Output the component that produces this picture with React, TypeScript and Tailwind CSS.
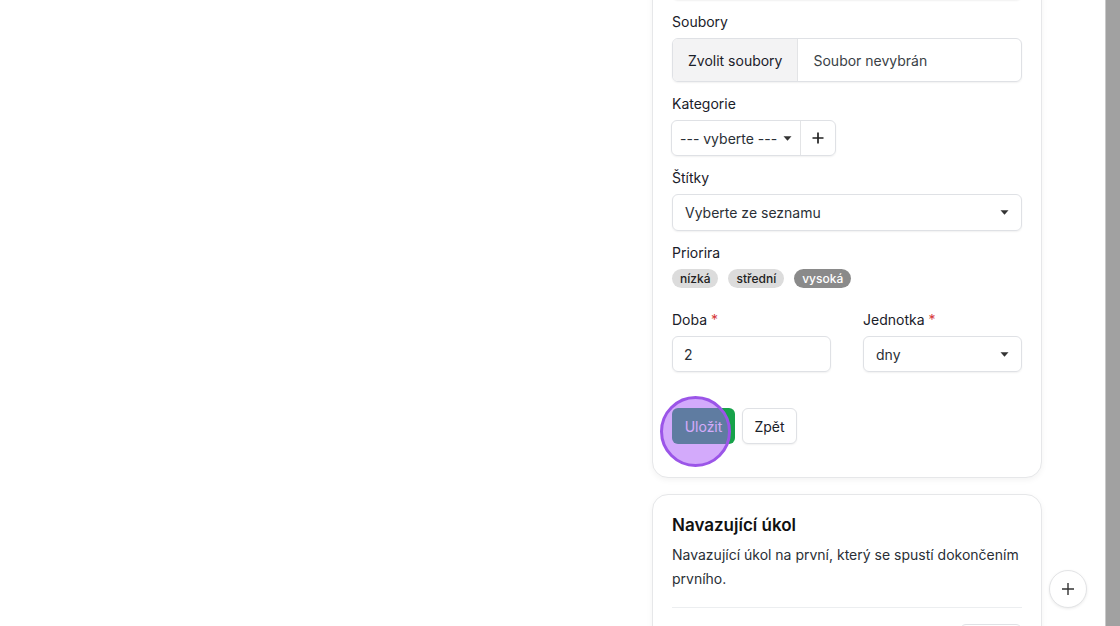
import React from "react";

function Caret() {
  return (
    <svg width="9" height="5" viewBox="0 0 9 5" className="shrink-0">
      <path d="M0.5 0.3 L8.5 0.3 L4.5 4.7 Z" fill="#333" />
    </svg>
  );
}

function Label({ children, req }: { children: React.ReactNode; req?: boolean }) {
  return (
    <div className="text-[14px] leading-5 text-[#1a2029] mb-[6px]">
      {children}
      {req && <span className="text-[#d63939] ml-1">*</span>}
    </div>
  );
}

export default function App() {
  return (
    <div
      className="relative flex h-[626px] w-[1120px] overflow-hidden bg-white"
      style={{ fontFamily: "Inter, 'Noto Sans', sans-serif" }}
    >
      <div className="flex-1 flex">
        <div className="w-[652px] shrink-0" />
        <div className="w-[390px] shrink-0 -mt-[84px] flex flex-col gap-[16px]">
          {/* main form card */}
          <div className="rounded-2xl border border-[#e6e7e9] bg-white shadow-[0_2px_6px_rgba(0,0,0,0.05)] px-[19px] pt-5 pb-[33px]">
            <div className="mb-3">
              <div className="h-5 mb-[6px]" />
              <div className="h-[37px] rounded-md border border-[#dfe1e5] shadow-[0_1px_2px_rgba(0,0,0,0.06)]" />
            </div>
            <div className="mb-3">
              <Label>Soubory</Label>
              <div className="flex h-[44px] rounded-md border border-[#dfe1e5] overflow-hidden shadow-[0_1px_2px_rgba(0,0,0,0.06)]">
                <div className="bg-[#f3f3f4] border-r border-[#e3e4e6] px-[15px] flex items-center text-[14px] text-[#1a2029]">
                  Zvolit soubory
                </div>
                <div className="flex items-center px-[15px] text-[14px] text-[#3a3f46]">Soubor nevybrán</div>
              </div>
            </div>
            <div className="mb-3">
              <Label>Kategorie</Label>
              <div className="flex h-[36px] w-[165px] rounded-md border border-[#dfe1e5] shadow-[0_1px_2px_rgba(0,0,0,0.06)] -ml-px">
                <div className="flex items-center justify-between flex-1 pl-2 pr-[8px] text-[14px] text-[#2a2f36] border-r border-[#e3e4e6]">
                  <span className="whitespace-nowrap">--- vyberte ---</span>
                  <Caret />
                </div>
                <div className="w-[34px] flex items-center justify-center">
                  <svg width="14" height="14" viewBox="0 0 14 14">
                    <path d="M7 1.5v11M1.5 7h11" stroke="#222" strokeWidth="1.7" />
                  </svg>
                </div>
              </div>
            </div>
            <div className="mb-3">
              <Label>Štítky</Label>
              <div className="flex items-center justify-between h-[37px] rounded-md border border-[#dfe1e5] shadow-[0_1px_2px_rgba(0,0,0,0.06)] pl-3 pr-[12px] text-[14px] text-[#2a2f36]">
                <span>Vyberte ze seznamu</span>
                <Caret />
              </div>
            </div>
            <div className="mb-[22px]">
              <div className="text-[14px] leading-5 text-[#1a2029] mb-[6px]">Priorira</div>
              <div className="flex gap-[10px]">
                <span className="rounded-full bg-[#dcdcdc] text-[#222] text-[12px] font-medium leading-[19px] px-2">nízká</span>
                <span className="rounded-full bg-[#dcdcdc] text-[#222] text-[12px] font-medium leading-[19px] px-2">střední</span>
                <span className="rounded-full bg-[#8a8a8a] text-white text-[12px] font-medium leading-[19px] px-2">vysoká</span>
              </div>
            </div>
            <div className="grid grid-cols-2 gap-8 mb-9">
              <div>
                <Label req>Doba</Label>
                <div className="flex items-center h-[36px] rounded-md border border-[#dfe1e5] shadow-[0_1px_2px_rgba(0,0,0,0.06)] px-[11px] text-[14px] text-[#2a2f36]">
                  2
                </div>
              </div>
              <div>
                <Label req>Jednotka</Label>
                <div className="flex items-center justify-between h-[36px] rounded-md border border-[#dfe1e5] shadow-[0_1px_2px_rgba(0,0,0,0.06)] pl-3 pr-[12px] text-[14px] text-[#2a2f36]">
                  <span>dny</span>
                  <Caret />
                </div>
              </div>
            </div>
            <div className="flex gap-[7px]">
              <div className="relative">
                <button className="h-[36px] w-[63px] rounded-md bg-[#17a24a] text-white text-[14px]">Uložit</button>
                <div className="absolute left-[-12px] top-[-12px] w-[71px] h-[71px] rounded-full bg-[rgba(168,85,247,0.5)] border-[3px] border-[#9b55e8]" />
              </div>
              <button className="h-[36px] w-[55px] rounded-md border border-[#dfe1e5] bg-white text-[14px] text-[#1a2029] shadow-[0_1px_2px_rgba(0,0,0,0.06)]">
                Zpět
              </button>
            </div>
          </div>

          {/* second card */}
          <div className="rounded-2xl border border-[#e6e7e9] bg-white shadow-[0_2px_6px_rgba(0,0,0,0.05)] px-[19px] pt-5 pb-6">
            <div className="text-[17px] leading-5 font-semibold text-[#111]">Navazující úkol</div>
            <p className="mt-2 text-[14px] leading-6 text-[#2a2f36]">
              Navazující úkol na první, který se spustí dokončením prvního.
            </p>
            <div className="mt-4 border-t border-[#eceef0] pt-4 flex justify-end">
              <div className="h-[36px] w-[62px] rounded-md border border-[#dfe1e5]" />
            </div>
          </div>
        </div>
        <div className="flex-1" />
      </div>
      <div className="w-[15px] shrink-0 bg-[#a1a1a1] border-l border-[#c9c9c9]" />
      <button className="absolute left-[1049px] top-[570px] w-[38px] h-[38px] rounded-full border border-[#e3e4e6] bg-white shadow-[0_1px_3px_rgba(0,0,0,0.08)] flex items-center justify-center">
        <svg width="16" height="16" viewBox="0 0 16 16">
          <path d="M8 2v12M2 8h12" stroke="#333" strokeWidth="1.4" />
        </svg>
      </button>
    </div>
  );
}
